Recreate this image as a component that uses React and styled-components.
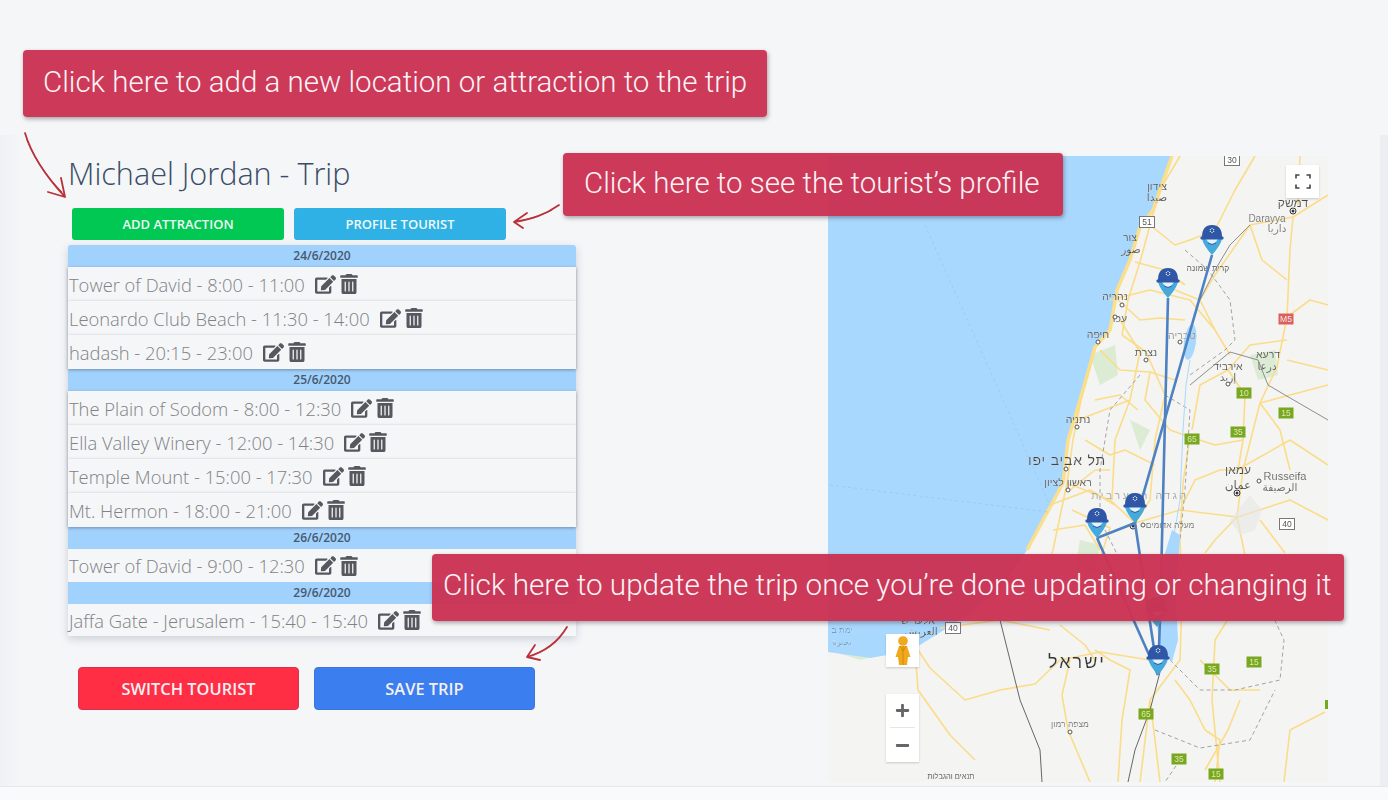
import React from "react";
import styled, { createGlobalStyle } from "styled-components";
import { FaEdit, FaTrashAlt, FaPlus, FaMinus } from "react-icons/fa";

const Global = createGlobalStyle`
  html, body { margin: 0; padding: 0; background: #f5f6f8; }
  * { box-sizing: border-box; }
`;

const Page = styled.div`
  position: relative;
  width: 1388px;
  height: 800px;
  overflow: hidden;
  background: #f5f6f8;
  font-family: "Open Sans", "Noto Sans", sans-serif;
`;
const TopBand = styled.div`
  height: 135px;
  background: #f5f6f8;
`;
const Workspace = styled.main`
  height: 651px;
  display: flex;
  padding: 21px 0 0 68px;
  border-right: 8px solid #eceef1;
  background: linear-gradient(90deg, #eff1f4 0, #f4f6f8 22px, #f5f6f8 100%);
`;
const FooterBand = styled.div`
  height: 14px;
  background: #f9fafb;
  border-top: 1px solid #e6e9ec;
`;
const TripColumn = styled.section`
  width: 508px;
  margin-right: 252px;
  display: flex;
  flex-direction: column;
`;
const Title = styled.h1`
  margin: 0;
  height: 31px;
  font-size: 30.6px;
  line-height: 34px;
  font-weight: 300;
  color: #3a4d66;
  white-space: nowrap;
`;
const TopActions = styled.div`
  display: flex;
  gap: 10px;
  margin: 21px 0 5px 4px;
`;
const SmallButton = styled.button`
  width: 212px;
  height: 32px;
  border: 0;
  border-radius: 3px;
  background: ${(p) => p.$bg};
  color: #eefaf4;
  font: 600 13px "Open Sans", sans-serif;
  padding: 0;
`;
const Schedule = styled.div`
  display: flex;
  flex-direction: column;
  box-shadow: 0 3px 8px rgba(60, 70, 90, 0.22);
  border-radius: 3px 3px 0 0;
`;
const DateBar = styled.div`
  height: ${(p) => p.$h}px;
  background: #a1d1fd;
  color: #47596e;
  font-size: 12px;
  font-weight: 600;
  line-height: 22px;
  text-align: center;
  border-radius: ${(p) => (p.$first ? "3px 3px 0 0" : "0")};
`;
const Row = styled.div`
  height: ${(p) => p.$h}px;
  display: flex;
  align-items: center;
  padding-left: 1px;
  background: #f5f6f8;
  color: #808285;
  font-size: 18.35px;
  font-weight: 300;
  white-space: nowrap;
  position: relative;
  box-shadow: ${(p) => (p.$shadow ? "0 1px 3px rgba(70, 75, 90, 0.5)" : "none")};
`;
const Icons = styled.span`
  display: inline-flex;
  align-items: center;
  margin-left: 10px;
  gap: 3px;
  color: #55585e;
  svg { display: block; }
`;
const BottomActions = styled.div`
  display: flex;
  gap: 15px;
  margin: 31px 0 0 10px;
`;
const BigButton = styled.button`
  width: 221px;
  height: 43px;
  border: 1px solid ${(p) => p.$edge};
  border-radius: 4px;
  background: ${(p) => p.$bg};
  color: #f5f0f2;
  font: 600 16.4px "Open Sans", sans-serif;
  padding: 0;
`;
const MapFrame = styled.div`
  position: relative;
  width: 500px;
  height: 626px;
  overflow: hidden;
  background: #f4f4f3;
  svg.base { display: block; filter: blur(0.35px); }
`;
const MapControl = styled.div`
  position: absolute;
  left: ${(p) => p.$x}px;
  top: ${(p) => p.$y}px;
  width: 33px;
  height: ${(p) => p.$h || 33}px;
  background: #fff;
  box-shadow: 0 1px 2px rgba(0, 0, 0, 0.18);
  display: flex;
  flex-direction: column;
  align-items: center;
  justify-content: center;
  color: #666;
`;
const ZoomSlot = styled.div`
  height: 34px;
  width: 25px;
  display: flex;
  align-items: center;
  justify-content: center;
  border-bottom: ${(p) => (p.$line ? "1px solid #e6e6e6" : "0")};
`;
const Callout = styled.div`
  position: absolute;
  left: ${(p) => p.$x}px;
  top: ${(p) => p.$y}px;
  width: ${(p) => p.$w}px;
  height: ${(p) => p.$h}px;
  display: flex;
  align-items: center;
  padding: 0 0 ${(p) => p.$lift}px ${(p) => p.$pad}px;
  background: rgba(203, 51, 84, 0.97);
  border-radius: 4px;
  box-shadow: 1px 2px 4px rgba(50, 40, 50, 0.4);
  color: #fbf3f5;
  font-family: Roboto, "Liberation Sans", sans-serif;
  font-weight: 300;
  font-size: ${(p) => p.$size}px;
  white-space: nowrap;
`;
const ArrowLayer = styled.svg`
  position: absolute;
  left: 0;
  top: 0;
  pointer-events: none;
`;

const schedule = [
  { date: "24/6/2020", h: 22, items: [["Tower of David - 8:00 - 11:00", 34], ["Leonardo Club Beach - 11:30 - 14:00", 34], ["hadash - 20:15 - 23:00", 34]] },
  { date: "25/6/2020", h: 22, items: [["The Plain of Sodom - 8:00 - 12:30", 34], ["Ella Valley Winery - 12:00 - 14:30", 34], ["Temple Mount - 15:00 - 17:30", 34], ["Mt. Hermon - 18:00 - 21:00", 34]] },
  { date: "26/6/2020", h: 22, items: [["Tower of David - 9:00 - 12:30", 33]] },
  { date: "29/6/2020", h: 22, items: [["Jaffa Gate - Jerusalem - 15:40 - 15:40", 32]] },
];

const roads = [
  "1095,350 1083,390 1073,440 1067,483 1053,550 1040,590",
  "1180,156 1160,190 1150,225 1140,262 1128,300 1122,335",
  "1122,335 1146,352 1165,395 1155,440 1150,500 1135,523",
  "1110,300 1150,290 1190,300 1215,330 1230,355",
  "1293,217 1290,250 1287,317 1277,367 1260,403 1243,470 1237,517",
  "1237,517 1245,555 1240,600 1215,640 1212,700 1220,782",
  "1190,437 1183,483 1180,540 1182,600 1180,660 1150,700 1140,782",
  "1228,370 1245,395 1243,440 1238,470",
  "1287,340 1250,345 1228,370 1200,385 1192,430",
  "1238,517 1290,500 1328,520",
  "1237,470 1290,440 1328,465",
  "1293,217 1328,195",
  "1293,217 1250,225 1215,275 1200,300",
  "1287,360 1328,370",
  "1120,320 1140,352 1130,400 1115,440 1112,500",
  "1078,420 1130,400",
  "1067,483 1110,500 1135,523",
  "1135,523 1180,510 1237,517",
  "1072,510 1110,528 1095,575",
  "1255,156 1235,190 1215,230",
  "1300,156 1298,205",
  "918,650 930,668 965,700 1000,690 1035,684 1060,660 1100,652 1150,660",
  "915,650 918,690 950,735 975,760",
  "1070,660 1062,695 1068,730 1090,782",
  "1095,650 1110,660 1130,670 1122,720 1118,782",
  "1175,680 1190,700 1205,730 1220,740 1215,782",
  "1240,700 1228,730 1205,770",
  "1325,712 1290,730 1284,782",
  "1150,700 1155,740 1160,782",
  "940,628 1000,620 1050,630",
  "1060,625 1085,645 1095,660",
  "1200,660 1230,690 1260,690",
  "1150,225 1175,245 1190,240 1215,230",
  "1135,262 1165,270 1185,285",
  "1118,300 1140,320 1160,318 1185,320",
  "1100,350 1120,370 1150,372 1175,380",
  "1150,372 1145,400 1170,430 1190,437",
  "1095,400 1120,395 1138,410",
  "1085,440 1110,455 1125,450 1155,465",
  "1070,490 1095,470 1110,470",
  "1190,437 1215,445 1243,440",
  "1260,403 1290,395 1328,385",
  "1287,317 1310,300 1328,305",
  "1260,403 1280,430 1290,470",
  "1215,330 1200,300 1175,290",
  "1250,225 1262,260 1287,280",
  "1180,510 1195,480 1220,470 1237,470",
  "1237,517 1215,540 1205,553",
  "1260,520 1285,553",
  "1050,505 1090,490 1115,505",
  "1053,530 1085,525 1100,550",
];
const thinBorders = [
  "1000,620 1020,700 1040,750 1042,782",
  "1160,672 1150,710 1135,750 1128,782",
];
const dashed = [
  "1185,250 1208,270 1230,300 1235,340 1225,350 1190,375",
  "1140,375 1110,410 1100,470 1100,520 1120,560",
  "1165,395 1190,410 1185,490 1180,540",
  "1170,660 1200,690 1235,690 1280,680 1284,640 1270,610",
  "1155,730 1200,748 1250,740 1275,690",
  "1180,760 1165,782",
];
const greens = ["1090,355 1115,345 1118,375 1100,385", "1250,355 1275,350 1278,375 1258,380", "1080,540 1100,545 1095,575 1075,570", "835,652 880,644 905,650 860,660", "1130,420 1150,430 1140,450"];

const Label = ({ x, y, s = 10.5, c = "#454545", w, sp, t }) => (
  <text x={x} y={y} fontSize={s} fill={c} textAnchor="middle" fontFamily="'Liberation Sans', 'DejaVu Sans', sans-serif" fontWeight={w || 400} letterSpacing={sp} stroke="#f4f4f3" strokeWidth="0.15">{t}</text>
);
const Shield = ({ x, y, t, fill = "#78a821", c = "#dfe9a8", border }) => (
  <g>
    <rect x={x - 7.5} y={y - 5.5} width="15" height="11" fill={fill} stroke={border || "none"} strokeWidth="1" />
    <text x={x} y={y + 3} fontSize="8.5" textAnchor="middle" fill={c} fontFamily="'Liberation Sans', sans-serif">{t}</text>
  </g>
);
const Dot = ({ x, y, big }) => big
  ? <g><circle cx={x} cy={y} r="3" fill="#fff" stroke="#333" /><circle cx={x} cy={y} r="1.5" fill="#333" /></g>
  : <circle cx={x} cy={y} r="2" fill="#fff" stroke="#555" strokeWidth="1" />;
const Pin = ({ x, y }) => (
  <g transform={`translate(${x} ${y})`}>
    <path d="M-10-16 L10-16 Q8-9 0 0 Q-8-9 -10-16Z" fill="#45a9dc" />
    <path d="M-6-16 Q0-6 6-16 Z" fill="#e4f2fa" />
    <path d="M-4-12 Q0-9 4-12" fill="none" stroke="#2f57a6" strokeWidth="0.9" />
    <path d="M-10-18 Q-10-30 0-30 Q10-30 10-18 Z" fill="#2f57a6" />
    <rect x="-11.500" y="-18.500" width="23" height="3" rx="1" fill="#2f57a6" />
    <path d="M0-27.500 L2.500-23 L-2.500-23Z M0-21.500 L2.500-26 L-2.500-26Z" fill="#e8eef8" />
  </g>
);

const MapDrawing = () => (
  <svg className="base" width="500" height="626" viewBox="828 156 500 626">
    <rect x="828" y="156" width="500" height="626" fill="#f4f4f3" />
    {greens.map((g) => <polygon key={g} points={g} fill="#cfe8c3" opacity="0.65" />)}
    <polygon points="828,156 1172,156 1153,210 1140,227 1130,260 1117,290 1110,330 1095,347 1083,390 1068,440 1063,483 1027,550 1000,590 960,620 920,645 905,652 870,658 828,652" fill="#a9d8fe" />
    <polyline points="1172,156 1153,210 1140,227 1130,260 1117,290 1110,330 1095,347 1083,390 1068,440 1063,483 1027,550" fill="none" stroke="#fbdf8a" strokeWidth="3.500" />
    <path d="M925 225L1050 505M830 485L1048 512" stroke="#93c3ea" strokeWidth="0.6" strokeDasharray="3 3" fill="none" />
    {roads.map((r) => <polyline key={r} points={r} fill="none" stroke="#fbdc88" strokeWidth="1.600" strokeLinejoin="round" />)}
    {thinBorders.map((r) => <polyline key={r} points={r} fill="none" stroke="#666" strokeWidth="1" />)}
    {dashed.map((r) => <polyline key={r} points={r} fill="none" stroke="#a3a3a3" strokeWidth="1" strokeDasharray="4 3" />)}
    <polyline points="1190,385 1230,352 1258,360 1268,385 1285,395 1328,420" fill="none" stroke="#8e8e8e" strokeWidth="1" />
    <polyline points="1200,300 1215,270 1230,245 1250,225" fill="none" stroke="#8e8e8e" strokeWidth="1" />
    <ellipse cx="1190" cy="342" rx="6" ry="18" fill="#a9d8fe" transform="rotate(8 1190 342)" />
    <polygon points="1172,530 1180,535 1176,600 1178,640 1172,662 1160,650 1157,625 1163,560" fill="#a9d8fe" />
    <polyline points="1190,360 1186,385 1183,430 1180,500 1174,535" fill="none" stroke="#a9d8fe" strokeWidth="1" />
    <polygon points="1250,495 1262,510 1255,530 1240,535 1230,520" fill="#e6e6e6" opacity="0.6" />

    <Shield x={1232} y={160} t="30" fill="#fff" c="#555" border="#777" />
    <Shield x={1147} y={222} t="51" fill="#fff" c="#555" border="#777" />
    <Shield x={1287} y={524} t="40" fill="#fff" c="#555" border="#777" />
    <Shield x={953} y={628} t="40" fill="#fff" c="#555" border="#777" />
    <Shield x={1286} y={319} t="M5" fill="#d9605f" c="#fbe6e5" />
    <Shield x={1244} y={393} t="10" />
    <Shield x={1286} y={413} t="15" />
    <Shield x={1238} y={432} t="35" />
    <Shield x={1192} y={439} t="65" />
    <Shield x={1212} y={669} t="35" />
    <Shield x={1254} y={662} t="15" />
    <Shield x={1146} y={714} t="65" />
    <Shield x={1179} y={759} t="35" />
    <Shield x={1216} y={774} t="15" />
    <rect x="1325" y="700" width="3" height="9" fill="#78a821" />

    <Label x={1157} y={190} t="צידון" />
    <Label x={1157} y={201} t="صيدا" />
    <Label x={1130} y={241} t="צור" />
    <Label x={1131} y={253} t="صور" />
    <Label x={1208} y={271} s={8.5} t="קרית שמונה" />
    <Label x={1115} y={300} t="נהריה" />
    <Label x={1120} y={322} t="עכו" />
    <Label x={1098} y={338} t="חיפה" />
    <Label x={1146} y={356} t="נצרת" />
    <Label x={1182} y={339} c="#8a8a8a" t="טבריה" />
    <Label x={1268} y={358} t="דרעא" />
    <Label x={1267} y={370} t="درعا" />
    <Label x={1228} y={370} t="אירביד" />
    <Label x={1228} y={381} t="إربد" />
    <Label x={1078} y={423} t="נתניה" />
    <Label x={1067} y={465} s={14} sp="0.8" t="תל אביב יפו" />
    <Label x={1068} y={486} t="ראשון לציון" />
    <Label x={1140} y={499} s={10.5} c="#999" sp="2.5" t="הגדה המערבית" />
    <Label x={1238} y={474} s={12} t="עמאן" />
    <Label x={1238} y={489} s={12} t="عمان" />
    <Label x={1285} y={480} s={11} c="#555" t="Russeifa" />
    <Label x={1280} y={491} s={10.5} c="#555" t="الرصيفة" />
    <Label x={1267} y={222} s={10} c="#666" t="Darayya" />
    <Label x={1277} y={232} c="#666" t="داريا" />
    <Label x={1293} y={207} s={12} t="דמשק" />
    <Label x={1170} y={528} s={8.5} c="#666" t="מעלה אדומים" />
    <Label x={1077} y={668} s={18} c="#333" sp="2" t="ישראל" />
    <Label x={1070} y={727} s={8.5} c="#666" t="מצפה רמון" />
    <Label x={842} y={633} s={8.5} c="#5b8db8" t="ימת ב" />
    <Label x={842} y={645} s={8.5} c="#5b8db8" t="بحيرة" />
    <Label x={918} y={624} t="אלעריש" />
    <Label x={921} y={635} t="العريش" />
    <Label x={951} y={779} s={7.5} c="#333" t="תנאים והגבלות" />
    <Dot x={1293} y={211} big /><Dot x={1122} y={305} /><Dot x={1115} y={317} /><Dot x={1098} y={342} />
    <Dot x={1146} y={360} /><Dot x={1180} y={342} /><Dot x={1228} y={384} /><Dot x={1077} y={427} />
    <Dot x={1066} y={469} /><Dot x={1068} y={490} /><Dot x={1237} y={493} big /><Dot x={1259} y={481} />
    <Dot x={1133} y={526} big /><Dot x={1143} y={525} /><Dot x={1070} y={732} />

    <g fill="none" stroke="#4d81c2" strokeWidth="2.6">
      <polyline points="1212,255 1135,523" />
      <polyline points="1168,298 1160,620 1158,675" />
      <polyline points="1135,523 1158,675" />
      <polyline points="1097,538 1135,523" />
      <polyline points="1097,538 1158,675" />
    </g>
    <Pin x={1212} y={255} /><Pin x={1168} y={298} /><Pin x={1135} y={523} /><Pin x={1097} y={538} /><Pin x={1157} y={627} /><Pin x={1158} y={675} />
  </svg>
);

const Pegman = () => (
  <svg width="16" height="29" viewBox="0 0 16 29">
    <circle cx="8" cy="5" r="4.800" fill="#f0a81e" />
    <path d="M4 10h8l3.500 11h-2.500l-1 8H4l-1-8H.5Z" fill="#f0a81e" />
    <path d="M8 10v19M5 10l3 5 3-5" fill="none" stroke="#c98500" strokeWidth="0.8" />
  </svg>
);
const Expand = () => (
  <svg width="16" height="15" viewBox="0 0 16 15" fill="none" stroke="#444" strokeWidth="1.600">
    <path d="M1 4.500V1h3.500M11.500 1H15v3.500M15 10.500V14h-3.500M4.500 14H1v-3.500" />
  </svg>
);

const Item = ({ text, h, shadow }) => (
  <Row $h={h} $shadow={shadow}>
    {text}
    <Icons>
      <FaEdit size={21} />
      <FaTrashAlt size={20} />
    </Icons>
  </Row>
);

export default function App() {
  return (
    <Page>
      <Global />
      <TopBand />
      <Workspace>
        <TripColumn>
          <Title>Michael Jordan - Trip</Title>
          <TopActions>
            <SmallButton $bg="#00c853">ADD ATTRACTION</SmallButton>
            <SmallButton $bg="#2fb1e5">PROFILE TOURIST</SmallButton>
          </TopActions>
          <Schedule>
            {schedule.map((day, d) => (
              <React.Fragment key={day.date}>
                <DateBar $first={d === 0} $h={day.h}>{day.date}</DateBar>
                {day.items.map(([it, h]) => (
                  <Item key={it} text={it} h={h} shadow={d < 2} />
                ))}
              </React.Fragment>
            ))}
          </Schedule>
          <BottomActions>
            <BigButton $bg="#ff2e45" $edge="#d8324a">SWITCH TOURIST</BigButton>
            <BigButton $bg="#3b7eef" $edge="#3a76d8">SAVE TRIP</BigButton>
          </BottomActions>
        </TripColumn>
        <MapFrame>
          <MapDrawing />
          <MapControl $x={458} $y={9}><Expand /></MapControl>
          <MapControl $x={58} $y={478}><Pegman /></MapControl>
          <MapControl $x={58} $y={538} $h={68}>
            <ZoomSlot $line><FaPlus size={15} /></ZoomSlot>
            <ZoomSlot><FaMinus size={15} /></ZoomSlot>
          </MapControl>
        </MapFrame>
      </Workspace>
      <FooterBand />
      <ArrowLayer width="1388" height="800" viewBox="0 0 1388 800">
        <g fill="none" stroke="#b9323a" strokeWidth="1.800" strokeLinecap="round" strokeLinejoin="round">
          <path d="M25 133C30 150 42 172 65 197M61 178L65 197L48 192" />
          <path d="M27 140C33 155 44 174 62 192" strokeWidth="1" />
          <path d="M559 205C545 215 532 219 514 222M527 213L514 222L523 228" />
          <path d="M552 210C543 215 532 218 520 221" strokeWidth="1" />
          <path d="M567 627C558 642 545 652 527 657M535 645L527 657L540 660" />
          <path d="M561 636C554 645 545 650 535 654" strokeWidth="1" />
        </g>
      </ArrowLayer>
      <Callout $x={23} $y={50} $w={744} $h={67} $pad={20} $size={29.5} $lift={4}>Click here to add a new location or attraction to the trip</Callout>
      <Callout $x={563} $y={153} $w={500} $h={63} $pad={21} $size={29.5} $lift={4}>Click here to see the tourist’s profile</Callout>
      <Callout $x={432} $y={554} $w={912} $h={67} $pad={11} $size={29.7} $lift={6}>Click here to update the trip once you’re done updating or changing it</Callout>
    </Page>
  );
}
